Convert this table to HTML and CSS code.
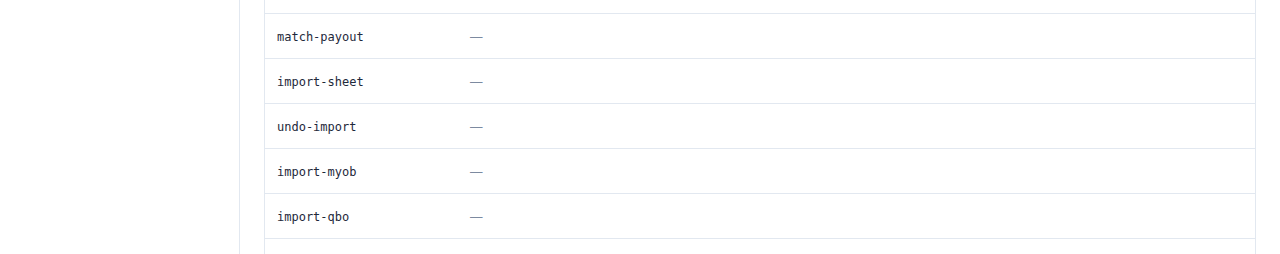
FILE: index.html
```html
<!DOCTYPE html>
<html lang="en">
<head>
  <meta charset="UTF-8" />
  <title>Jobs</title>
  <link rel="stylesheet" href="styles.css">
</head>
<body>
  <div class="layout">
    <aside class="sidebar"></aside>
    <main class="content">
      <div class="table">
        <div class="row"><div class="cell key"></div><div class="cell val"></div></div>
        <div class="row"><div class="cell key">match-payout</div><div class="cell val">—</div></div>
        <div class="row"><div class="cell key">import-sheet</div><div class="cell val">—</div></div>
        <div class="row"><div class="cell key">undo-import</div><div class="cell val">—</div></div>
        <div class="row"><div class="cell key">import-myob</div><div class="cell val">—</div></div>
        <div class="row"><div class="cell key">import-qbo</div><div class="cell val">—</div></div>
        <div class="row"><div class="cell key"></div><div class="cell val"></div></div>
      </div>
    </main>
  </div>
</body>
</html>
```

FILE: styles.css
```css
body {
  margin: 0;
  background: #fff;
  font-family: "Inter", "Noto Sans", sans-serif;
  color: #0f172a;
  overflow: hidden;
}

.layout {
  display: flex;
  height: 254px;
  overflow: hidden;
}

.sidebar {
  width: 239px;
  flex: none;
  border-right: 1px solid #e2e8f0;
}

.content {
  flex: 1;
  padding: 0 24px;
}

.table {
  margin-top: -31px;
  border-left: 1px solid #e2e8f0;
  border-right: 1px solid #e2e8f0;
}

.row {
  display: grid;
  grid-template-columns: 193px 1fr;
  height: 44px;
  border-bottom: 1px solid #e2e8f0;
  align-items: center;
}

.cell {
  padding: 2px 12px 0;
}

.key {
  font-family: "DejaVu Sans Mono", monospace;
  font-size: 12px;
  color: #1e293b;
}

.val {
  padding-top: 0;
  font-size: 12.5px;
  color: #7c8aa0;
}
```
